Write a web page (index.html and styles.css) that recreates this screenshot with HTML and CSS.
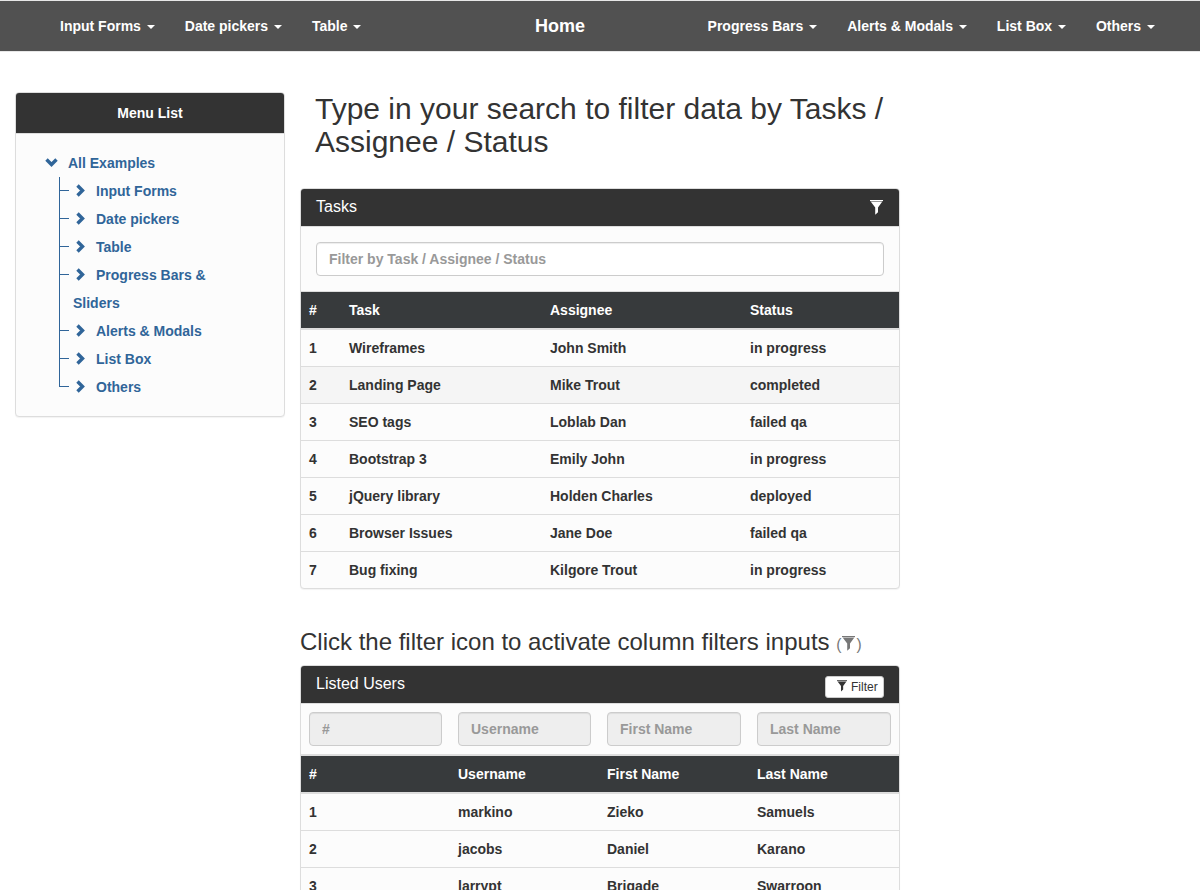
FILE: index.html
```html
<!DOCTYPE html>
<html lang="en">
<head>
<meta charset="utf-8">
<title>Table filter</title>
<link rel="stylesheet" href="styles.css">
</head>
<body>
<svg class="defs" width="0" height="0">
  <symbol id="funnel" viewBox="0 0 13 15"><path d="M0 0h13v1H0z"/><path d="M.6 1h11.8v1H.6z" opacity=".5"/><path d="M1 2h11L8 7.6v4.6L5.2 14.8V7.6z"/></symbol>
  <symbol id="chevron" viewBox="0 0 9 13"><path d="M1.5 1.5 6.5 6.5l-5 5" fill="none" stroke="currentColor" stroke-width="3.4"/></symbol>
</svg>
<nav class="navbar">
  <ul class="nav nav-left">
    <li>Input Forms <b class="caret"></b></li>
    <li>Date pickers <b class="caret"></b></li>
    <li>Table <b class="caret"></b></li>
  </ul>
  <a class="brand">Home</a>
  <ul class="nav nav-right">
    <li>Progress Bars <b class="caret"></b></li>
    <li>Alerts &amp; Modals <b class="caret"></b></li>
    <li>List Box <b class="caret"></b></li>
    <li>Others <b class="caret"></b></li>
  </ul>
</nav>
<div class="page">
  <aside class="panel menu">
    <div class="menu-head">Menu List</div>
    <div class="menu-body">
      <div class="root"><svg class="down"><use href="#chevron"/></svg>All Examples</div>
      <ul class="tree">
        <li><svg class="chev"><use href="#chevron"/></svg>Input Forms</li>
        <li><svg class="chev"><use href="#chevron"/></svg>Date pickers</li>
        <li><svg class="chev"><use href="#chevron"/></svg>Table</li>
        <li><svg class="chev"><use href="#chevron"/></svg>Progress Bars &amp; Sliders</li>
        <li><svg class="chev"><use href="#chevron"/></svg>Alerts &amp; Modals</li>
        <li><svg class="chev"><use href="#chevron"/></svg>List Box</li>
        <li><svg class="chev"><use href="#chevron"/></svg>Others</li>
      </ul>
    </div>
  </aside>
  <main class="content">
    <h1>Type in your search to filter data by Tasks / Assignee / Status</h1>
    <section class="panel tasks">
      <div class="panel-head"><span>Tasks</span><svg class="head-funnel"><use href="#funnel"/></svg></div>
      <div class="search"><input class="field" placeholder="Filter by Task / Assignee / Status"></div>
      <table>
        <colgroup><col class="c-num"><col class="c-task"><col class="c-who"><col></colgroup>
        <thead><tr><th>#</th><th>Task</th><th>Assignee</th><th>Status</th></tr></thead>
        <tbody>
          <tr><td>1</td><td>Wireframes</td><td>John Smith</td><td>in progress</td></tr>
          <tr class="hover"><td>2</td><td>Landing Page</td><td>Mike Trout</td><td>completed</td></tr>
          <tr><td>3</td><td>SEO tags</td><td>Loblab Dan</td><td>failed qa</td></tr>
          <tr><td>4</td><td>Bootstrap 3</td><td>Emily John</td><td>in progress</td></tr>
          <tr><td>5</td><td>jQuery library</td><td>Holden Charles</td><td>deployed</td></tr>
          <tr><td>6</td><td>Browser Issues</td><td>Jane Doe</td><td>failed qa</td></tr>
          <tr><td>7</td><td>Bug fixing</td><td>Kilgore Trout</td><td>in progress</td></tr>
        </tbody>
      </table>
    </section>
    <h3>Click the filter icon to activate column filters inputs <small>(<svg class="small-funnel"><use href="#funnel"/></svg>)</small></h3>
    <section class="panel users">
      <div class="panel-head"><span>Listed Users</span><button class="btn"><svg><use href="#funnel"/></svg>Filter</button></div>
      <table>
        <colgroup><col class="c-a"><col class="c-a"><col class="c-b"><col></colgroup>
        <thead>
          <tr class="filters"><th><input class="field" placeholder="#" disabled></th><th><input class="field" placeholder="Username" disabled></th><th><input class="field" placeholder="First Name" disabled></th><th><input class="field" placeholder="Last Name" disabled></th></tr>
          <tr><th>#</th><th>Username</th><th>First Name</th><th>Last Name</th></tr>
        </thead>
        <tbody>
          <tr><td>1</td><td>markino</td><td>Zieko</td><td>Samuels</td></tr>
          <tr><td>2</td><td>jacobs</td><td>Daniel</td><td>Karano</td></tr>
          <tr><td>3</td><td>larrypt</td><td>Brigade</td><td>Swarroon</td></tr>
        </tbody>
      </table>
    </section>
  </main>
</div>
</body>
</html>
```
FILE: styles.css
```css
* { box-sizing: border-box; }
html, body { height: 890px; overflow: hidden; }
body {
  margin: 0;
  font: bold 14px/20px "Liberation Sans", Arial, sans-serif;
  color: #333;
  background: #fff;
}
ul { list-style: none; margin: 0; padding: 0; }
.defs { position: absolute; }

.navbar {
  display: flex;
  align-items: center;
  height: 52px;
  padding: 0 45px 0 60px;
  background: #515151;
  border: solid #e7e7e7;
  border-width: 1px 0;
  color: #fff;
}
.nav { display: flex; gap: 30px; white-space: nowrap; }
.nav-left { width: 475px; }
.nav-right { margin-left: auto; }
.brand { font-size: 18px; }
.caret {
  display: inline-block;
  margin-left: 2px;
  vertical-align: middle;
  border: 4px solid transparent;
  border-top-color: #fff;
  border-bottom: 0;
}

.page { display: flex; align-items: flex-start; padding: 40px 0 0 15px; gap: 15px; }
.panel {
  border: 1px solid #ddd;
  border-radius: 4px;
  background: #fcfcfc;
  box-shadow: 0 1px 1px rgba(0, 0, 0, .05);
  overflow: hidden;
}
.menu { width: 270px; height: 325px; flex: none; }
.menu-head {
  height: 41px;
  padding: 10px;
  text-align: center;
  color: #fff;
  background: #333;
  border-bottom: 1px solid #ddd;
}
.menu-body { padding: 15px 35px 0 29px; line-height: 28px; color: #306599; }
.root { display: flex; align-items: center; }
.down { width: 9px; height: 13px; margin: -2px 12px 0 2px; transform: rotate(90deg); }
.tree { margin-left: 14px; }
.tree li { position: relative; padding-left: 14px; }
.tree li::before {
  content: "";
  position: absolute;
  left: 0;
  top: 0;
  bottom: 0;
  border-left: 1px solid #306599;
}
.tree li:last-child::before { bottom: auto; height: 14px; }
.tree li::after {
  content: "";
  position: absolute;
  left: 0;
  top: 13px;
  width: 10px;
  border-top: 1px solid #306599;
}
.chev { width: 9px; height: 13px; margin: 0 11px 0 3px; vertical-align: -1px; }

.content { width: 600px; flex: none; }
h1, h3 { margin: 0; font-weight: normal; }
h1 { padding: 0 15px; font-size: 30px; line-height: 33px; }
.tasks { margin-top: 30px; }
.panel-head {
  display: flex;
  justify-content: space-between;
  height: 38px;
  padding: 8px 15px 0;
  font-weight: normal;
  font-size: 16px;
  line-height: 20px;
  color: #fff;
  background: #333;
  border-bottom: 1px solid #ddd;
}
.users .panel-head { line-height: 19px; }
.head-funnel { width: 13px; height: 15px; margin: 3px 1px 0 0; fill: #fff; }
.search { height: 65px; padding: 15px; border-bottom: 1px solid #ddd; }
.field {
  display: block;
  width: 100%;
  height: 34px;
  padding: 6px 12px;
  font: inherit;
  color: #555;
  background: #fff;
  border: 1px solid #ccc;
  border-radius: 4px;
  box-shadow: inset 0 1px 1px rgba(0, 0, 0, .075);
}
.field::placeholder { color: #999; opacity: 1; }
.field:disabled { background: #eee; }

table { width: 100%; table-layout: fixed; border-collapse: separate; border-spacing: 0; }
.c-num { width: 40px; }
.c-task { width: 201px; }
.c-who { width: 200px; }
.c-a { width: 149px; }
.c-b { width: 150px; }
th, td { padding: 8px; text-align: left; }
th { height: 38px; color: #fff; background: #373a3c; border-bottom: 2px solid #ddd; }
td { border-top: 1px solid #ddd; height: 37px; }
tbody tr:first-child td { border-top: 0; height: 36px; }
.hover td { background: #f5f5f5; }
.filters th { height: 52px; background: #fcfcfc; }

h3 { margin: 40px 0 10px; font-size: 24px; line-height: 26px; height: 26px; white-space: nowrap; }
h3 small { font-size: 15.6px; color: #777; }
.small-funnel { width: 13px; height: 15px; margin: 0 1px; fill: #777; vertical-align: -1px; }
.btn {
  display: flex;
  align-items: center;
  gap: 4px;
  width: 59px;
  height: 22px;
  margin-top: 2px;
  padding: 0 0 0 11px;
  font: 12px/18px "Liberation Sans", Arial, sans-serif;
  color: #333;
  background: #fff;
  border: 1px solid #ccc;
  border-radius: 3px;
}
.btn svg { width: 10px; height: 12px; margin-top: -2px; fill: #333; flex: none; }
```
